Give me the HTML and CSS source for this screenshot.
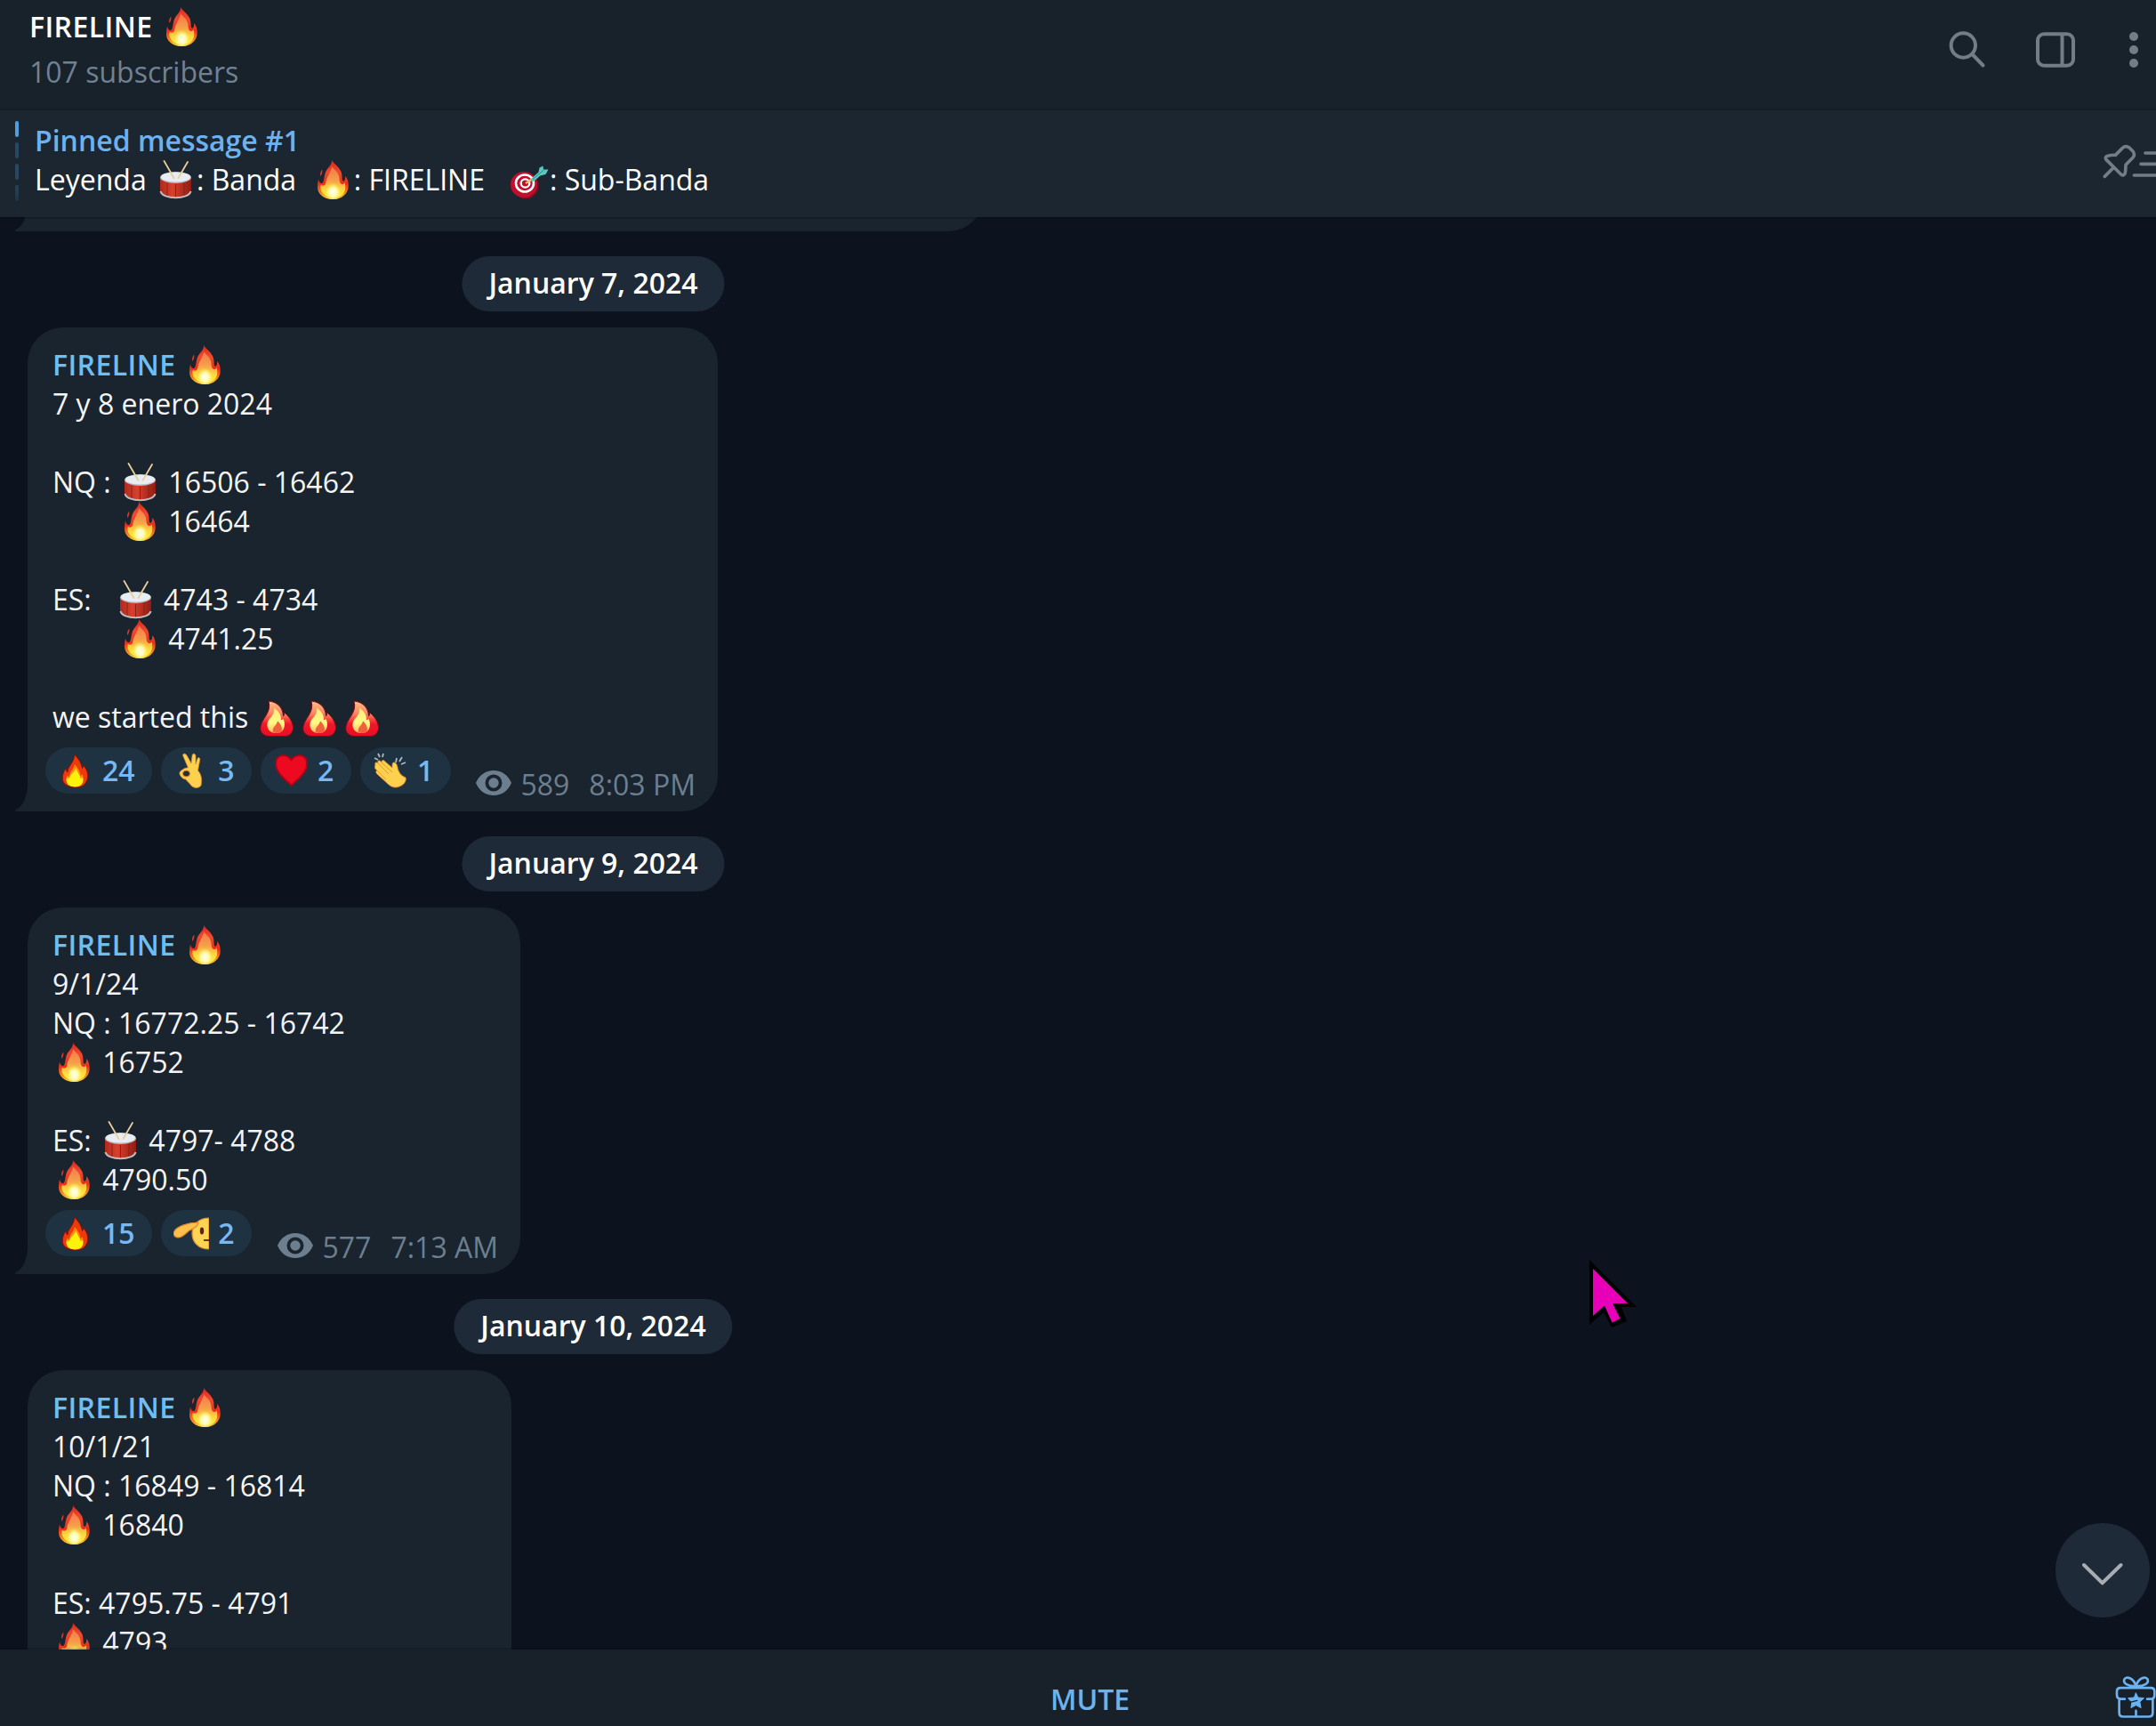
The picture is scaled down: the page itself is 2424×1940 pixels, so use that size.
FILE: index.html
```
<!DOCTYPE html>
<html lang="en">
<head>
<meta charset="utf-8">
<title>FIRELINE</title>
<link rel="stylesheet" href="styles.css">
</head>
<body>
<svg class="defs" aria-hidden="true">
  <defs>
    <linearGradient id="gOuter" x1="0" y1="0" x2="0" y2="1">
      <stop offset="0" stop-color="#d8281c"/><stop offset=".3" stop-color="#ee4a30"/><stop offset=".6" stop-color="#e8301c"/><stop offset=".85" stop-color="#f58a1c"/><stop offset="1" stop-color="#fbd838"/>
    </linearGradient>
    <linearGradient id="gInner" x1="0" y1="0" x2="0" y2="1">
      <stop offset="0" stop-color="#f4764a"/><stop offset=".45" stop-color="#f6a04a"/><stop offset=".75" stop-color="#fcd93c"/><stop offset="1" stop-color="#fff23e"/>
    </linearGradient>
    <radialGradient id="gCore"><stop offset="0" stop-color="#fffff0"/><stop offset=".5" stop-color="#fffbb0"/><stop offset="1" stop-color="#fff04a" stop-opacity="0"/></radialGradient>
    <linearGradient id="gPlump" x1="0" y1="0" x2="0" y2="1"><stop offset="0" stop-color="#ffc184"/><stop offset=".35" stop-color="#f98763"/><stop offset=".65" stop-color="#f0182c"/><stop offset="1" stop-color="#e80c26"/></linearGradient>
    <linearGradient id="gPlumpIn" x1="0" y1="0" x2="0" y2="1"><stop offset="0" stop-color="#ffe87c"/><stop offset=".6" stop-color="#fffb86"/><stop offset="1" stop-color="#fbb05c"/></linearGradient>
    <linearGradient id="gDrum" x1="0" x2="1"><stop offset="0" stop-color="#b02a1c"/><stop offset=".4" stop-color="#d8402c"/><stop offset="1" stop-color="#8e1c14"/></linearGradient>
    <symbol id="fire" viewBox="0 0 48 44">
      <path fill="url(#gOuter)" d="M23.300 0C25 4 31 7 33.500 13c1.500 4 .8 7.500 1.500 10 .4 1 1.500 1 2.300 0 .8-1.300 1-3 1-5C41 21 42 25 41.700 29.500 41.500 37 35 44 24.500 44 14 44 7 38 7 30.500c0-3 .2-6 1-9 .5 2.500 1.500 4 3.200 4.500 1.800.3 2.300-1.500 2.800-3.500 1-4 1-9 4.500-13C21 6.500 23 4 23.300 0z"/>
      <path fill="#d8382a" d="M12.300 10.500c.4 3-.3 5.500-2 7.500-.8-2.500 0-5.500 2-7.500z"/>
      <path fill="url(#gInner)" d="M23.300 7c2 4 7 6 8 12 .4 3 .2 6 2 7.500 1.500 1 3.500.4 4.500-1 1 6 .5 10-3 13.500-4 4-16 4-20 0-4-3.500-5-7-4-11 2 1.500 5 1 5.500-2.500C17 19 22 14 23.300 7z"/>
      <ellipse cx="24.500" cy="36" rx="9" ry="10.500" fill="url(#gCore)"/>
    </symbol>
    <symbol id="plump" viewBox="0 0 48 44">
      <path fill="url(#gPlump)" stroke="#7d0a14" stroke-width="1" d="M14 4c9 1 16 6 16.500 17 1-1.500 1.200-2.500 1.500-4 6 5 10 12 9.500 18-.5 5-4 8.500-9.500 8.500H15C9 43.500 5 40 4.800 35 4.500 24 18 18 14 4z"/>
      <path fill="url(#gPlumpIn)" d="M20 12c6 3 8.500 9 8 13 1 0 2-.4 2.500-1 3 6 2 16-8 16-7 0-10.500-5-10-10C13 23 22 20 20 12z"/>
      <path fill="#f0603c" d="M24 26.500c4 3.500 6 8 4.500 12.500-3 1.500-6 1.500-9.500 0-1.500-6 4-7 5-12.500z"/>
    </symbol>
    <symbol id="flame" viewBox="0 0 40 40">
      <path fill="#ee3a08" stroke="#8c0c0c" d="M19 2c2 3 7 7 8.500 15.500 1-1 1-2 1-3.500 5 5 6.500 12 4.500 17-2 5-6 8-13 8S6.500 36 5.500 31C4.500 25 7 20 9 18c.5 2 1 3 2 4C11 15 18 12 19 2z"/>
      <path fill="#ff8a10" d="M19 13c4 5 6 8 6.500 13 1-.4 1.500-1 2-2 3 6-1 14-8 14S7 33 11 25c.6 1.500 1 2 2 2 0-6 5-8 6-14z"/>
      <path fill="#fff20a" d="M20.500 17c1 5 4.500 8 5 12 1 0 1.800-.5 2.500-1.200C30 34 26 38.500 19.500 38.500S8 35 10 27.500c1 1 2 1.500 3 1.500 1-6 6-6 7.500-12z"/>
    </symbol>
    <symbol id="drum" viewBox="0 0 48 44">
      <path fill="url(#gDrum)" d="M7 20v16c2 9 33 9 35 0V20z"/>
      <path stroke="#8b2019" fill="none" d="M15 26v14M34 26v14M24.500 27v15"/>
      <path stroke="#b9bcc0" stroke-width="2" fill="none" d="M7.500 35c2 9.500 32 9.500 34 0"/>
      <ellipse cx="24.500" cy="19.500" rx="17.500" ry="6.500" fill="#b4b9c0"/>
      <ellipse cx="24.500" cy="19" rx="16.500" ry="5.600" fill="#e8edf3"/>
      <path stroke="#e8cf98" stroke-width="1.800" stroke-linecap="round" d="M11.500 1l11 19M38 2L27.500 20"/>
    </symbol>
    <symbol id="dart" viewBox="0 0 48 44">
      <ellipse cx="21" cy="28.800" rx="14.500" ry="14.500" fill="#8c0d20"/>
      <ellipse cx="19" cy="27.500" rx="15" ry="14.500" fill="#c00f2c"/>
      <g fill="none" stroke="#fff"><ellipse cx="20" cy="26" rx="10" ry="9.500" stroke-width="2.600"/><ellipse cx="20.500" cy="26" rx="4.800" ry="4.600" stroke-width="2.400"/></g>
      <path stroke="#e9c36a" stroke-width="2.500" d="M21 26l8-5"/>
      <path fill="#5cc8bd" d="M26.500 21.500l9-8 1-5 4-2 .5 4 5.500 0-3 5.500-6 1.500-9 7.500z"/>
      <path stroke="#2c8f88" d="M29 21.500l13-11"/>
    </symbol>
    <symbol id="ok" viewBox="0 0 40 40">
      <path fill="#fdd04e" stroke="#e08a2c" stroke-width=".8" d="M11 4c-1.500-3 2-4 4-1l5 9 1-8c0-4 4-3.500 4 0v9l2-6c1-2.500 3-1.500 2.700 1L27.500 20c4.500 5 4.500 11 3.500 17-3 3.500-8 3-11 0-2-3-4-4-6-7-3 0-6-3-7-6-.6-3 2-4 5-6 1.500-.8 3-1.200 4.500-1z"/>
      <ellipse cx="14.500" cy="23.500" rx="4" ry="3.500" fill="#1e3242" stroke="#e08a2c"/>
    </symbol>
    <symbol id="heart" viewBox="0 0 40 40">
      <path fill="#ed0a20" stroke="#a80418" stroke-width="2" d="M20.500 37C15 31 3 23 3 12.500 3 6 7 3 11.500 3c4 0 7 2 9 5.500C22.500 5 25.500 3 29.500 3 34 3 38 6 38 12.500 38 23 26 31 20.500 37z"/>
    </symbol>
    <symbol id="clap" viewBox="0 0 40 40">
      <path fill="#fdd04e" stroke="#e08a2c" stroke-width=".9" d="M3 14c-1-3 1-4 3-2-1-4 2-4 4-1 0-3 2-3 4-1l8 7c0-4 0-6 2-6 3 0 4 5 4.500 8 2 5 4 7 8.500 9 1.500 4-3 9-7 10-4 2-9 1-13-3L5 24c-2-2-1-4 0-4-3-2-3-4-2-6z"/>
      <path stroke="#e59a34" stroke-width="1" fill="none" d="M6 12l12 12M10 11l12 11M5 20l10 10"/>
      <path stroke="#aeb7bf" stroke-width="1.800" fill="none" d="M2 6l4 2M6 1l2 4M12 1l-1 4M27 6l-1 5M33 5l-3 5M37 11l-5 2"/>
    </symbol>
    <symbol id="salute" viewBox="0 0 40 40">
      <path fill="#fdd454" stroke="#e08a2c" stroke-width="1.200" d="M40 3c-12 0-19 8-19 17.500S28 38 40 38z"/>
      <path fill="#fdc04a" stroke="#e08a2c" stroke-width="1.200" d="M1 18c2-5 15-10 27-10 0 5-6 7-10 9-4 3-7 7-12 8-5 0-7-4-5-7z"/>
      <ellipse cx="32" cy="17.500" rx="2.200" ry="4" fill="#5c2410"/><path stroke="#5c2410" stroke-width="1.800" d="M34 28h6"/>
    </symbol>
    <symbol id="eye" viewBox="0 0 40 28">
      <path fill="currentColor" fill-rule="evenodd" d="M0 14C4 5 11 0 20 0s16 5 20 14c-4 9-11 14-20 14S4 23 0 14zM20 4.500a9.500 9.500 0 1 0 0 19 9.500 9.500 0 0 0 0-19z"/>
      <circle cx="20" cy="14" r="5.700" fill="currentColor"/>
    </symbol>
  </defs>
</svg>

<div class="app">
  <header class="topbar">
    <div class="chat-info">
      <h1 class="chat-title"><span class="name">FIRELINE</span> <svg class="emoji"><use href="#fire"/></svg></h1>
      <div class="chat-status">107 subscribers</div>
    </div>
    <div class="actions">
      <svg class="ic-search" viewBox="0 0 42 42"><circle cx="16.300" cy="16" r="13.700"/><path d="M26.500 26L38.500 38.500"/></svg>
      <svg class="ic-panel" viewBox="0 0 44 40"><rect x="2" y="2.300" width="40" height="35.400" rx="7"/><path d="M29.500 3v34"/></svg>
      <svg class="ic-more" viewBox="0 0 10 40"><circle cx="5" cy="5" r="5"/><circle cx="5" cy="20" r="5"/><circle cx="5" cy="35" r="5"/></svg>
    </div>
  </header>

  <section class="pinned">
    <div class="pin-track"><i></i><i></i><i></i><i></i><i></i></div>
    <div class="pin-body">
      <div class="pin-title">Pinned message #1</div>
      <div class="pin-text">Leyenda <svg class="emoji"><use href="#drum"/></svg>: Banda  <svg class="emoji"><use href="#fire"/></svg>: FIRELINE   <svg class="emoji"><use href="#dart"/></svg>: Sub-Banda</div>
    </div>
    <svg class="ic-pin" viewBox="600 480 192 129"><path d="M619 595L648 566M624 538Q618 529 629 526Q642 522 655 523L679 499Q690 490 702 498L714 510Q722 521 715 530L690 556Q690 572 688 583Q684 595 674 588Z M756 516H800M741 553H800M718 591H800"/></svg>
  </section>

  <main class="history">
    <article class="bubble bubble-prev"><svg class="tail" viewBox="0 0 15 40"><path d="M15 0Q14 34 0 38V40H15z"/></svg></article>

    <div class="date">January 7, 2024</div>
    <article class="bubble b1">
      <div class="text"><b class="from"><span class="name">FIRELINE</span> <svg class="emoji"><use href="#fire"/></svg></b>
7 y 8 enero 2024

NQ : <svg class="emoji"><use href="#drum"/></svg> 16506 - 16462
<span class="indent"></span><svg class="emoji"><use href="#fire"/></svg> 16464

ES:   <svg class="emoji"><use href="#drum"/></svg> 4743 - 4734
<span class="indent"></span><svg class="emoji"><use href="#fire"/></svg> 4741.25

we started this <svg class="emoji"><use href="#plump"/></svg><svg class="emoji"><use href="#plump"/></svg><svg class="emoji"><use href="#plump"/></svg></div>
      <footer class="foot">
        <span class="react"><svg><use href="#flame"/></svg>24</span>
        <span class="react"><svg><use href="#ok"/></svg>3</span>
        <span class="react"><svg><use href="#heart"/></svg>2</span>
        <span class="react"><svg><use href="#clap"/></svg>1</span>
        <span class="meta"><svg><use href="#eye"/></svg><span>589</span><span class="time">8:03 PM</span></span>
      </footer>
      <svg class="tail" viewBox="0 0 15 40"><path d="M15 0Q14 34 0 38V40H15z"/></svg>
    </article>

    <div class="date">January 9, 2024</div>
    <article class="bubble b2">
      <div class="text"><b class="from"><span class="name">FIRELINE</span> <svg class="emoji"><use href="#fire"/></svg></b>
9/1/24
NQ : 16772.25 - 16742
<svg class="emoji"><use href="#fire"/></svg> 16752

ES: <svg class="emoji"><use href="#drum"/></svg> 4797- 4788
<svg class="emoji"><use href="#fire"/></svg> 4790.50</div>
      <footer class="foot">
        <span class="react"><svg><use href="#flame"/></svg>15</span>
        <span class="react"><svg><use href="#salute"/></svg>2</span>
        <span class="meta"><svg><use href="#eye"/></svg><span>577</span><span class="time">7:13 AM</span></span>
      </footer>
      <svg class="tail" viewBox="0 0 15 40"><path d="M15 0Q14 34 0 38V40H15z"/></svg>
    </article>

    <div class="date">January 10, 2024</div>
    <article class="bubble b3">
      <div class="text"><b class="from"><span class="name">FIRELINE</span> <svg class="emoji"><use href="#fire"/></svg></b>
10/1/21
NQ : 16849 - 16814
<svg class="emoji"><use href="#fire"/></svg> 16840

ES: 4795.75 - 4791
<svg class="emoji"><use href="#fire"/></svg> 4793
</div>
    </article>
    <button class="to-bottom" aria-label="Scroll down"><svg viewBox="0 0 46 26"><path d="M2 3L22.700 23.300L43.500 3"/></svg></button>
  </main>

  <footer class="bottombar">
    <span class="mute">MUTE</span>
    <svg class="ic-gift" viewBox="350 580 142 150"><path d="M424 616C400 618 380 608 384 594C390 580 416 588 424 616C432 588 458 580 464 594C468 608 448 618 424 616M386 660H374Q359 660 359 646V634Q359 622 372 622H474Q487 622 487 634V646Q487 660 474 660H462M367 662V706Q367 720 381 720H467Q481 720 481 706V662M424 720V700"/><path class="star" d="M424 640l7 15 20 2-14 13 4 20-17-9-17 9 3-19-13-14 20-2z"/><path class="slit" d="M400 672l28-7"/></svg>
  </footer>
</div>
<svg class="cursor" viewBox="0 0 56 78"><path fill="#000" d="M0 0L53 53H36L42 69 25 76 16 59 0 73z"/><path fill="#e800b8" d="M4 10V63L17 51.500 25.500 70.500 34.500 66 26 49H43z"/></svg>
</body>
</html>
```
FILE: styles.css
```
* { box-sizing: border-box; }
body {
  margin: 0;
  background: #0d131e;
  color: #f5f5f5;
  font: 400 32px/44px "Open Sans", sans-serif;
}
.defs { position: absolute; width: 0; height: 0; }
.app { display: flex; flex-direction: column; width: 2424px; height: 1940px; overflow: hidden; }
svg { display: block; flex: none; }

.topbar {
  display: flex; justify-content: space-between; align-items: flex-start;
  height: 124px; flex: none;
  padding: 8px 20px 0 33px;
  background: #18222a; border-bottom: 2px solid #141e26;
}
.chat-title { margin: 0; font-size: inherit; font-weight: 600; color: #fff; white-space: pre; height: 44px; }
.name { letter-spacing: .4px; }
.chat-status { margin-top: 7px; color: #708196; }
.actions { display: flex; align-items: center; height: 40px; margin-top: 28px; }
.actions svg, .ic-pin { fill: none; stroke: #727d87; stroke-width: 4; stroke-linecap: round; stroke-linejoin: round; }
.ic-search { width: 42px; height: 42px; margin-right: 56px; }
.ic-panel { width: 44px; height: 40px; margin-right: 61px; }
.actions .ic-more { width: 10px; height: 40px; fill: #727d87; stroke: none; }

.pinned {
  display: flex; height: 120px; flex: none;
  padding: 12px 0 0 17px;
  background: #1b2631;
}
.pin-track { display: flex; flex-direction: column; gap: 6px; width: 4px; margin-right: 18px; height: 108px; }
.pin-track i { height: 18px; border-radius: 2px; background: #264a66; flex: none; }
.pin-track i:nth-child(1) { background: #4f9fdc; }
.pin-track i:nth-child(4) { background: linear-gradient(#26435b, #1f3344); }
.pin-track i:nth-child(5) { background: #1b2833; height: 10px; }
.pin-body { flex: 1; }
.pin-title { color: #6db2f0; font-weight: 600; }
.pin-text { color: #fff; white-space: pre; }
.ic-pin { width: 64px; height: 43px; margin-top: 24px; }
.ic-pin path { stroke-width: 11; }

.emoji { display: inline-block; width: 48px; height: 44px; vertical-align: top; }
.indent { display: inline-block; width: 74px; }

.history {
  position: relative; flex: 1; min-height: 0; overflow: hidden;
  padding: 2px 0 0 31px;
}
.history::before, .history::after {
  content: ""; position: absolute; left: 0; right: 0; z-index: 1;
  height: 2px; background: rgba(0, 0, 0, .16);
}
.history::before { top: 0; }
.history::after { bottom: 0; }
.bubble {
  position: relative; display: flex; flex-direction: column; gap: 12px;
  padding: 20px 25px 20px 28px;
  background: #19242f; border-radius: 40px 40px 40px 0;
}
.bubble-prev { width: 1075px; height: 100px; margin-top: -86px; }
.b1 { width: 776px; height: 544px; }
.b2 { width: 554px; height: 412px; }
.b3 { width: 544px; height: 420px; }
.tail { position: absolute; left: -14px; bottom: 0; width: 15px; height: 40px; fill: #19242f; }
.text { white-space: pre; }
.from { font-weight: 600; color: #6fbfee; }
.date {
  width: fit-content; height: 62px; margin: 28px 0 18px 636px; padding: 8px 30px;
  transform: translateX(-50%);
  border-radius: 31px; background: #1e2a38; color: #fff; font-weight: 600;
}
.foot { display: flex; gap: 10px; height: 52px; margin-left: -8px; }
.react {
  display: flex; align-items: center; gap: 10px;
  padding: 0 19.6px 0 14px; border-radius: 26px;
  background: #1e3242; color: #76b9f5; font-weight: 600;
}
.react svg { width: 40px; height: 40px; }
.meta { display: flex; align-items: center; margin-left: auto; height: 44px; margin-top: 20px; color: #6d7f8f; }
.meta svg { width: 40px; height: 28px; margin: -4px 10px 0 0; }
.time { margin-left: 22px; }

.to-bottom {
  position: absolute; right: 7px; bottom: 36px;
  display: grid; place-items: center; width: 106px; height: 106px; padding: 7px 0 0;
  border: 0; border-radius: 50%; background: #1e2a38;
}
.to-bottom svg { width: 46px; height: 26px; fill: none; stroke: #a8adb3; stroke-width: 4; stroke-linecap: round; stroke-linejoin: round; }

.bottombar {
  display: flex; align-items: flex-start; height: 86px; flex: none;
  background: #182129;
}
.mute { flex: 1; padding: 34px 0 0 74px; text-align: center; color: #6db2f0; font-weight: 600; }
.ic-gift { width: 47px; height: 50px; margin-top: 29px; fill: none; stroke: #6db2f0; stroke-width: 8; stroke-linecap: round; stroke-linejoin: round; }
.ic-gift .star { fill: #6db2f0; stroke-width: 3; }
.ic-gift .slit { stroke: #182129; stroke-width: 4; }

.cursor { position: absolute; left: 1787px; top: 1416px; width: 56px; height: 78px; }
```
